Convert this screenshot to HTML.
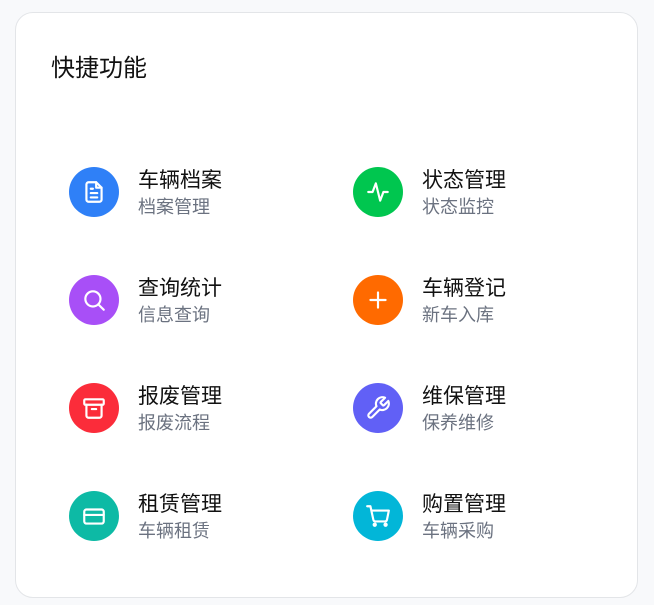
<!DOCTYPE html>
<html><head><meta charset="utf-8"><style>
body{margin:0;background:#f8f9fb;width:654px;height:605px;font-family:"Liberation Sans","Noto Sans CJK SC",sans-serif;}
.card{position:absolute;left:15px;top:12px;width:621px;height:584px;background:#fff;border:1px solid #e3e5e8;border-radius:18px;}
h1{position:absolute;left:35px;top:40px;margin:0;font-size:24px;font-weight:400;color:#111;line-height:32px;}
.it{position:absolute;}
.ic{position:absolute;left:0;top:0;width:50px;height:50px;border-radius:50%;display:flex;align-items:center;justify-content:center;}
.t{position:absolute;left:69px;top:0px;font-size:21px;color:#111;white-space:nowrap;line-height:28px;}
.s{position:absolute;left:69px;top:28px;font-size:18px;color:#6b7280;white-space:nowrap;line-height:24px;}
svg{width:26px;height:26px;fill:none;stroke:#fff;stroke-width:2;stroke-linecap:round;stroke-linejoin:round;}
</style></head><body>
<div class="card"><h1>快捷功能</h1></div>

<div class="it" style="left:69px;top:167px"><div class="ic" style="background:#2f80f7"><svg viewBox="0 0 24 24"><path d="M14 3H7a2 2 0 0 0-2 2v14a2 2 0 0 0 2 2h10a2 2 0 0 0 2-2V8z"/><path d="M14 3v5h5M9 13h6M9 17h6M9 9h2"/></svg></div><div class="t">车辆档案</div><div class="s">档案管理</div></div>

<div class="it" style="left:353px;top:167px"><div class="ic" style="background:#00c64f"><svg viewBox="0 0 24 24"><path d="M3 12h4l3-8 4 16 3-8h4"/></svg></div><div class="t">状态管理</div><div class="s">状态监控</div></div>

<div class="it" style="left:69px;top:275px"><div class="ic" style="background:#a84ff7"><svg viewBox="0 0 24 24"><circle cx="11" cy="11" r="7"/><path d="M21 21l-5-5"/></svg></div><div class="t">查询统计</div><div class="s">信息查询</div></div>

<div class="it" style="left:353px;top:275px"><div class="ic" style="background:#ff6a00"><svg viewBox="0 0 24 24"><path d="M12 5v14M5 12h14"/></svg></div><div class="t">车辆登记</div><div class="s">新车入库</div></div>

<div class="it" style="left:69px;top:383px"><div class="ic" style="background:#fb2c3a"><svg viewBox="0 0 24 24"><rect x="3" y="4" width="18" height="5" rx="1"/><path d="M5 9v10a2 2 0 0 0 2 2h10a2 2 0 0 0 2-2V9M10 13h4"/></svg></div><div class="t">报废管理</div><div class="s">报废流程</div></div>

<div class="it" style="left:353px;top:383px"><div class="ic" style="background:#6160f6"><svg viewBox="0 0 24 24"><path d="M14.7 6.3a1 1 0 0 0 0 1.4l1.6 1.6a1 1 0 0 0 1.4 0l3.8-3.8a6 6 0 0 1-7.9 7.9l-6.9 6.9a2.1 2.1 0 0 1-3-3l6.9-6.9a6 6 0 0 1 7.9-7.9z"/></svg></div><div class="t">维保管理</div><div class="s">保养维修</div></div>

<div class="it" style="left:69px;top:491px"><div class="ic" style="background:#0dbaa5"><svg viewBox="0 0 24 24"><rect x="3" y="6" width="18" height="13" rx="2"/><path d="M3 11h18"/></svg></div><div class="t">租赁管理</div><div class="s">车辆租赁</div></div>

<div class="it" style="left:353px;top:491px"><div class="ic" style="background:#02b6d8"><svg viewBox="0 0 24 24"><circle cx="9" cy="20" r="1"/><circle cx="19" cy="20" r="1"/><path d="M2 3h3l2.7 12.4a2 2 0 0 0 2 1.6h8.6a2 2 0 0 0 2-1.6L22 7H6"/></svg></div><div class="t">购置管理</div><div class="s">车辆采购</div></div>
</body></html>
